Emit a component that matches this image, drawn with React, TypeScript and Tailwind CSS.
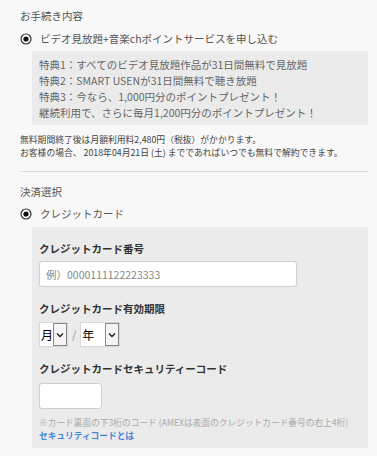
export default function App() {
  return (
    <div className="min-h-[456px] bg-[#f8f8f8] pl-[20px] pr-[9px] pt-[8px] text-[#555] font-['Noto_Sans_CJK_JP','Noto_Sans',sans-serif]">
      <h2 className="text-[10.5px] leading-[16px] font-normal">お手続き内容</h2>
      <Radio label="ビデオ見放題+音楽chポイントサービスを申し込む" className="mt-[7px]" />
      <div className="ml-[12px] mt-[4px] bg-[#ebebeb] pl-[7px] pt-[6px] pb-[4px] text-[10.5px] leading-[16px] text-[#666]">
        <p>特典1：すべてのビデオ見放題作品が31日間無料で見放題</p>
        <p>特典2：SMART USENが31日間無料で聴き放題</p>
        <p>特典3：今なら、1,000円分のポイントプレゼント！</p>
        <p>継続利用で、さらに毎月1,200円分のポイントプレゼント！</p>
      </div>
      <div className="mt-[8px] text-[8.8px] leading-[13px] text-[#444]">
        <p>無料期間終了後は月額利用料2,480円（税抜）がかかります。</p>
        <p>お客様の場合、 2018年04月21日 (土) までであればいつでも無料で解約できます。</p>
      </div>
      <hr className="mt-[12px] border-0 border-t border-[#dcdcdc]" />

      <h2 className="mt-[12px] text-[10.5px] leading-[16px] font-normal">決済選択</h2>
      <Radio label="クレジットカード" className="mt-[6px]" />
      <div className="ml-[12px] mt-[5px] bg-[#ebebeb] pl-[7px] pt-[14px] pb-[6px]">
        <label className="block text-[10.5px] leading-[16px] font-bold text-[#333]">クレジットカード番号</label>
        <input
          type="text"
          placeholder="例）0000111122223333"
          className="mt-[4px] block h-[26px] w-[258px] rounded-[3px] border border-[#cfcfcf] bg-white pl-[6px] text-[10.5px] text-[#555] placeholder:text-[#888] outline-none"
        />

        <label className="mt-[14px] block text-[10.5px] leading-[16px] font-bold text-[#333]">クレジットカード有効期限</label>
        <div className="mt-[5px] flex items-center">
          <FakeSelect text="月" width="w-[29px]" />
          <span className="mx-[4px] text-[11px] text-[#999]">/</span>
          <FakeSelect text="年" width="w-[40px]" />
        </div>

        <label className="mt-[14px] block text-[10.5px] leading-[16px] font-bold text-[#333]">クレジットカードセキュリティーコード</label>
        <input
          type="text"
          className="mt-[6px] block h-[26px] w-[63px] rounded-[3px] border border-[#cfcfcf] bg-white outline-none"
        />
        <div className="mt-[7px] text-[8.7px] leading-[13px]">
          <p className="text-[#aaa]">※カード裏面の下3桁のコード (AMEXは表面のクレジットカード番号の右上4桁)</p>
          <a href="#" className="font-bold text-[#3f88da]">セキュリティコードとは</a>
        </div>
      </div>
    </div>
  );
}

function Radio({ label, className }: { label: string; className?: string }) {
  return (
    <div className={`flex items-center gap-[8px] ${className ?? ""}`}>
      <svg width="12" height="12" viewBox="0 0 12 12" className="shrink-0">
        <circle cx="6" cy="6" r="5" fill="#fff" stroke="#333" strokeWidth="1.2" />
        <circle cx="6" cy="6" r="2.6" fill="#111" />
      </svg>
      <span className="text-[10.5px] leading-[16px]">{label}</span>
    </div>
  );
}

function FakeSelect({ text, width }: { text: string; width: string }) {
  return (
    <div className={`flex h-[25px] ${width} items-stretch border border-[#d8d8d8] bg-white`}>
      <span className="flex-1 pl-px text-[12px] leading-[23px] text-black">{text}</span>
      <span className="flex w-[14px] items-center justify-center border border-[#8a8a8a] bg-[#f4f4f4]">
        <svg width="8" height="6" viewBox="0 0 8 6">
          <path d="M1 1.5 L4 4.5 L7 1.5" fill="none" stroke="#222" strokeWidth="1.4" />
        </svg>
      </span>
    </div>
  );
}
